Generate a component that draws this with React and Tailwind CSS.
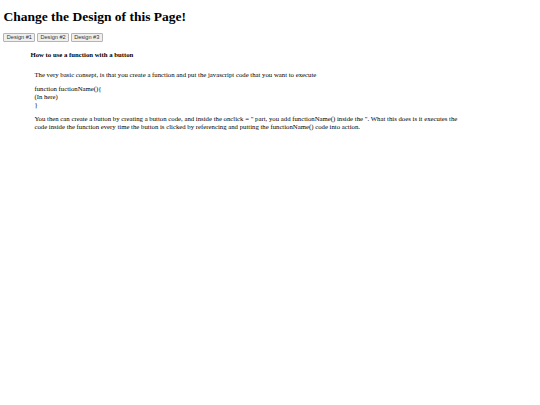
import React from 'react';

const serif = "font-['Liberation_Serif','Times_New_Roman',serif]";

const DesignButton = ({ label }) => (
  <button
    type="button"
    className="h-[9px] px-[2.4px] border border-[#b4b4b4] rounded-[1px] bg-[#efefef] text-[5.6px] leading-none text-[#333] font-['Liberation_Sans',Arial,sans-serif]"
  >
    {label}
  </button>
);

const App = () => {
  return (
    <div className={`min-h-[405px] w-[540px] bg-white text-black px-[3.4px] ${serif}`}>
      <h1 className="pt-[9px] text-[13.5px] leading-[15.5px] font-bold">Change the Design of this Page!</h1>

      <div className="mt-[8.5px] flex gap-[1.7px]">
        <DesignButton label="Design #1" />
        <DesignButton label="Design #2" />
        <DesignButton label="Design #3" />
      </div>

      <div className="pl-[27px] pt-[8.5px]">
        <h4 className="text-[6.75px] leading-[7.8px] font-bold">How to use a function with a button</h4>

        <div className="pl-[4px] pt-[12.5px] w-[430px] text-[6.75px] leading-[7.76px]">
          <p>The very basic consept, is that you create a function and put the javascript code that you want to execute</p>

          <p className="mt-[6.75px]">
            function fuctionName(){'{'}
            <br />
            (In here)
            <br />
            {'}'}
          </p>

          <p className="mt-[6.75px]">
            You then can create a button by creating a button code, and inside the onclick = &quot; part, you add
            functionName() inside the &quot;. What this does is it executes the code inside the function every time the
            button is clicked by referencing and putting the functionName() code into action.
          </p>
        </div>
      </div>
    </div>
  );
};

export default App;
